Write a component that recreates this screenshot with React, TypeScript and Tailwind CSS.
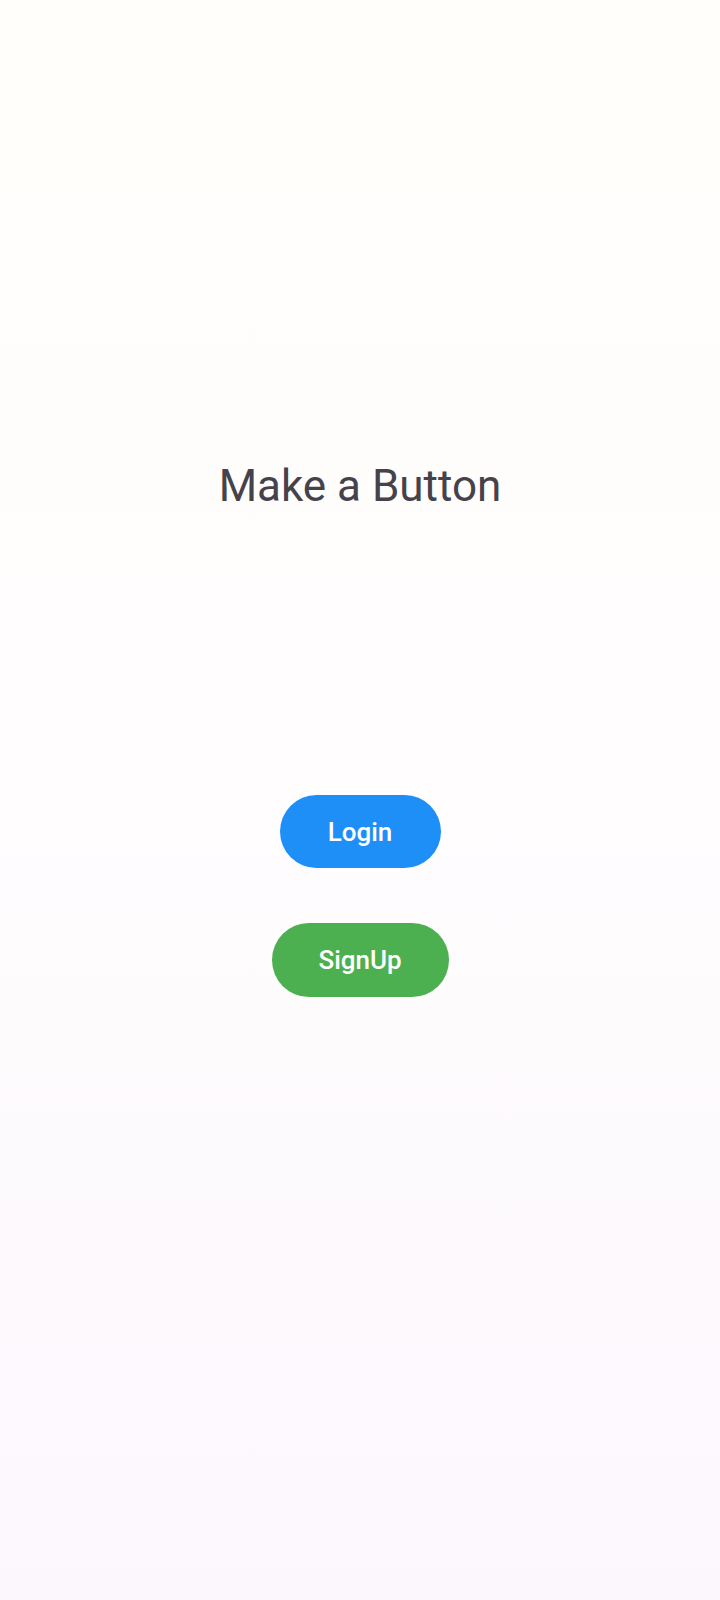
export default function App() {
  return (
    <div
      className="min-h-[1600px] w-full bg-gradient-to-b from-[#fffefa] via-[#fffdfe] to-[#fcf7fd] flex flex-col items-center"
      style={{ fontFamily: 'Roboto, "Noto Sans", sans-serif' }}
    >
      {/* Titulo */}
      <h1 className="mt-[464px] text-[44px] leading-none font-normal text-[#46424c]">
        Make a Button
      </h1>

      {/* Botones */}
      <div className="mt-[287px] flex flex-col items-center gap-[55px]">
        <button className="h-[73px] w-[161px] rounded-full bg-[#1e8ff7] text-white text-[26px] font-medium leading-none flex items-center justify-center">
          Login
        </button>
        <button className="h-[74px] w-[177px] rounded-full bg-[#4caf50] text-white text-[26px] font-medium leading-none flex items-center justify-center">
          SignUp
        </button>
      </div>
    </div>
  );
}
